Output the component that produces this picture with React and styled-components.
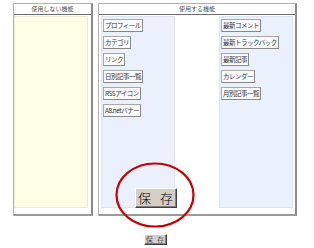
import React from 'react';
import styled, { createGlobalStyle } from 'styled-components';

const GlobalStyle = createGlobalStyle`
  body {
    margin: 0;
    background: #fff;
    font-family: "Noto Sans CJK JP", "DejaVu Sans", sans-serif;
  }
`;

const Page = styled.div`
  position: relative;
  width: 314px;
  height: 248px;
  padding: 3px 0 0 13px;
  box-sizing: border-box;
`;

const Row = styled.div`
  display: flex;
  gap: 5px;
  align-items: flex-start;
`;

const Panel = styled.div`
  width: ${(p) => p.$width}px;
  height: 213px;
  box-sizing: border-box;
  border: 1px solid #b0b0b0;
  border-right: 2px solid #8a8a8a;
  border-bottom: 2px solid #9a9a9a;
  display: flex;
  flex-direction: column;
`;

const PanelHead = styled.div`
  height: 10px;
  line-height: 10px;
  border-bottom: 1px solid #6a6a6a;
  text-align: center;
  font-size: 6px;
  color: #555;
`;

const PanelBody = styled.div`
  flex: 1;
  display: flex;
  gap: ${(p) => p.$gap || 0}px;
  padding: 1px 2px 6px ${(p) => p.$left}px;
`;

const Column = styled.div`
  width: 74px;
  box-sizing: border-box;
  background: ${(p) => (p.$yellow ? '#ffffe6' : '#eaf1fd')};
  border: 1px solid ${(p) => (p.$yellow ? '#ebebd8' : '#dde4ee')};
  display: flex;
  flex-direction: column;
  align-items: flex-start;
  gap: 4px;
  padding: 2px 1px;
`;

const Item = styled.div`
  height: 13px;
  box-sizing: border-box;
  padding: 0 1px;
  border: 1px solid #a8a8a8;
  border-right-color: #888;
  border-bottom-color: #888;
  background: #fbfbfb;
  font-size: 6.5px;
  line-height: 11px;
  color: #333;
  white-space: nowrap;
  letter-spacing: -0.5px;
`;

const Footer = styled.div`
  display: flex;
  justify-content: center;
  width: 284px;
  margin-top: 18px;
`;

const SaveButton = styled.button`
  font-family: "Noto Sans CJK JP", sans-serif;
  font-weight: 300;
  background: #d4d0c8;
  border: 1px solid;
  border-color: #fff #404040 #404040 #fff;
  color: #000;
  padding: 0;
  width: ${(p) => (p.$big ? 42 : 23)}px;
  height: ${(p) => (p.$big ? 20 : 11)}px;
  font-size: ${(p) => (p.$big ? 13 : 7)}px;
  word-spacing: ${(p) => (p.$big ? 6 : 3)}px;
  line-height: 1;
  box-shadow: inset -1px -1px 0 #808080;
`;

const Callout = styled.div`
  position: absolute;
  left: 115px;
  top: 162px;
  width: 80px;
  height: 66px;
  display: flex;
  align-items: center;
  justify-content: center;
`;

const Ring = styled.svg`
  position: absolute;
  inset: 0;
`;

const BigWrap = styled.div`
  position: relative;
  margin-top: 2px;
  margin-left: 1px;
`;

const unused = [];
const leftItems = ['プロフィール', 'カテゴリ', 'リンク', '日別記事一覧', 'RSSアイコン', 'A8.netバナー'];
const rightItems = ['最新コメント', '最新トラックバック', '最新記事', 'カレンダー', '月別記事一覧'];

export default function App() {
  return (
    <>
      <GlobalStyle />
      <Page>
        <Row>
          <Panel $width={80}>
            <PanelHead>使用しない機能</PanelHead>
            <PanelBody $left={0}>
              <Column $yellow>
                {unused.map((t) => (
                  <Item key={t}>{t}</Item>
                ))}
              </Column>
            </PanelBody>
          </Panel>
          <Panel $width={199}>
            <PanelHead>使用する機能</PanelHead>
            <PanelBody $left={2} $gap={44}>
              <Column>
                {leftItems.map((t) => (
                  <Item key={t}>{t}</Item>
                ))}
              </Column>
              <Column>
                {rightItems.map((t) => (
                  <Item key={t}>{t}</Item>
                ))}
              </Column>
            </PanelBody>
          </Panel>
        </Row>
        <Footer>
          <SaveButton>保 存</SaveButton>
        </Footer>
        <Callout>
          <Ring width="80" height="66" viewBox="0 0 80 66">
            <ellipse cx="40" cy="33" rx="38.5" ry="31.5" fill="none" stroke="#c80000" strokeWidth="2.2" />
          </Ring>
          <BigWrap>
            <SaveButton $big>保 存</SaveButton>
          </BigWrap>
        </Callout>
      </Page>
    </>
  );
}
